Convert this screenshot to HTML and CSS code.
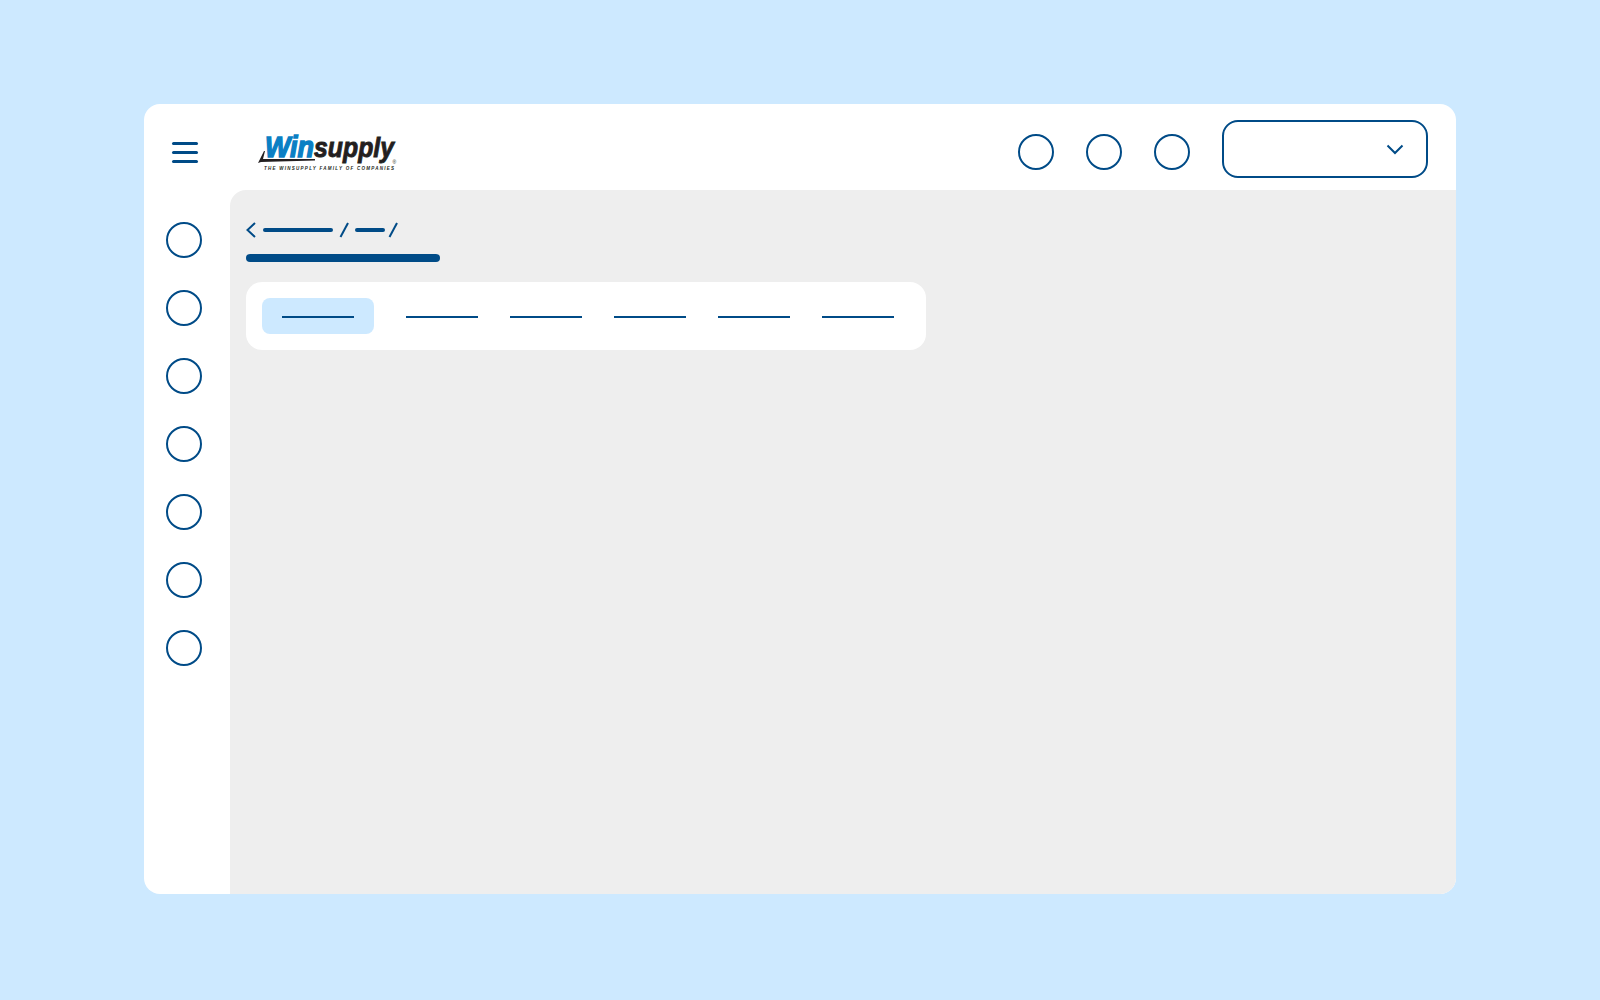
FILE: index.html
```html
<!DOCTYPE html>
<html lang="en">
  <head>
    <meta charset="UTF-8" />
    <meta name="viewport" content="width=device-width, initial-scale=1.0" />
    <title>Winsupply</title>
    <link rel="stylesheet" href="styles.css">
  </head>

  <body>
    <div class="window">
      <!-- Top bar -->
      <header class="topbar">
        <div class="hamburger">
          <span></span>
          <span></span>
          <span></span>
        </div>

        <svg class="logo" width="148" height="46" viewBox="0 0 148 46">
          <path class="logo-swoosh" d="M0 35 L6 23 L7 23 L5 31 L57 31 L57 32.5 L3 34 Z" />
          <text class="logo-win" x="7" y="29" textLength="49" lengthAdjust="spacingAndGlyphs">Win</text>
          <text class="logo-supply" x="56" y="29" textLength="80" lengthAdjust="spacingAndGlyphs">supply</text>
          <text class="logo-tag" x="6" y="42" textLength="130" lengthAdjust="spacing">THE WINSUPPLY FAMILY OF COMPANIES</text>
          <text class="logo-mark" x="134.5" y="36">®</text>
        </svg>

        <div class="top-icons">
          <span class="circle"></span>
          <span class="circle"></span>
          <span class="circle"></span>
        </div>

        <div class="select">
          <svg width="18" height="11" viewBox="0 0 18 11">
            <path class="icon-line" d="M1.5 1.5 L9 9 L16.5 1.5" />
          </svg>
        </div>
      </header>

      <!-- Left rail -->
      <nav class="rail">
        <span class="circle"></span>
        <span class="circle"></span>
        <span class="circle"></span>
        <span class="circle"></span>
        <span class="circle"></span>
        <span class="circle"></span>
        <span class="circle"></span>
      </nav>

      <!-- Content -->
      <main class="content">
        <div class="breadcrumb">
          <svg width="10" height="16" viewBox="0 0 10 16">
            <path class="icon-line" d="M9 1 L1.5 8 L9 15" />
          </svg>
          <span class="crumb crumb-long"></span>
          <svg class="slash" width="10" height="16" viewBox="0 0 10 16">
            <path class="icon-line" d="M9 1 L1.5 15" />
          </svg>
          <span class="crumb crumb-short"></span>
          <svg class="slash-last" width="10" height="16" viewBox="0 0 10 16">
            <path class="icon-line" d="M9 1 L1.5 15" />
          </svg>
        </div>

        <div class="page-title"></div>

        <div class="tabs">
          <div class="tab tab-active"><span></span></div>
          <div class="tab"><span></span></div>
          <div class="tab"><span></span></div>
          <div class="tab"><span></span></div>
          <div class="tab"><span></span></div>
          <div class="tab"><span></span></div>
        </div>
      </main>
    </div>
  </body>
</html>
```

FILE: styles.css
```css
/* Global Styles */
body {
  margin: 0;
  padding: 104px 144px 106px;
  height: 100vh;
  box-sizing: border-box;
  background: #cde9ff;
}

.window {
  height: 100%;
  display: grid;
  grid-template-columns: 86px 1fr;
  grid-template-rows: 86px 1fr;
  background: #fff;
  border-radius: 16px;
  overflow: hidden;
}

.circle {
  display: block;
  width: 36px;
  height: 36px;
  border: 2px solid #004b87;
  border-radius: 50%;
  box-sizing: border-box;
}

.icon-line {
  fill: none;
  stroke: #004b87;
  stroke-width: 2;
}

/* Top bar */
.topbar {
  grid-column: 1 / 3;
  display: flex;
  align-items: flex-start;
  padding: 0 28px;
}

.hamburger {
  width: 26px;
  margin-top: 38px;
}

.hamburger span {
  display: block;
  height: 3px;
  margin-bottom: 6px;
  background: #004b87;
  border-radius: 2px;
}

.hamburger span:last-child {
  margin-bottom: 0;
}

.logo {
  margin-left: 60px;
  margin-top: 24px;
}

.logo text {
  font-family: "Liberation Sans", sans-serif;
  font-weight: bold;
  font-style: italic;
}

.logo-swoosh {
  fill: #231f20;
}

.logo .logo-win {
  font-size: 29px;
  fill: #0a7fc4;
  stroke: #0a7fc4;
  stroke-width: 1.4;
}

.logo .logo-supply {
  font-size: 28px;
  fill: #231f20;
  stroke: #231f20;
  stroke-width: 0.9;
}

.logo .logo-tag {
  font-size: 4.5px;
  fill: #231f20;
}

.logo .logo-mark {
  font-size: 5px;
  font-style: normal;
  font-weight: normal;
  fill: #231f20;
}

.top-icons {
  display: flex;
  gap: 32px;
  margin-left: auto;
  margin-top: 30px;
}

.select {
  width: 206px;
  height: 58px;
  margin-left: 32px;
  margin-top: 16px;
  padding-right: 22px;
  border: 2px solid #004b87;
  border-radius: 16px;
  box-sizing: border-box;
  display: flex;
  align-items: center;
  justify-content: flex-end;
}

/* Left rail */
.rail {
  display: flex;
  flex-direction: column;
  gap: 32px;
  padding: 32px 0 0 22px;
}

/* Content */
.content {
  background: #eee;
  border-radius: 16px 0 0 0;
  padding: 32px 16px;
}

.breadcrumb {
  display: flex;
  align-items: center;
  height: 16px;
}

.crumb {
  height: 4px;
  background: #004b87;
  border-radius: 2px;
}

.crumb-long {
  width: 70px;
  margin-left: 7px;
}

.crumb-short {
  width: 30px;
  margin-left: 6px;
}

.slash {
  margin-left: 6px;
}

.slash-last {
  margin-left: 3px;
}

.page-title {
  width: 194px;
  height: 8px;
  margin-top: 16px;
  background: #004b87;
  border-radius: 4px;
}

.tabs {
  display: inline-flex;
  margin-top: 20px;
  padding: 16px;
  background: #fff;
  border-radius: 16px;
}

.tab {
  height: 36px;
  padding: 0 16px;
  display: flex;
  align-items: center;
  border-radius: 8px;
}

.tab span {
  display: block;
  width: 72px;
  height: 2px;
  margin-top: 2px;
  background: #004b87;
}

.tab-active {
  padding: 0 20px;
  margin-right: 16px;
  background: #cde9ff;
}
```
